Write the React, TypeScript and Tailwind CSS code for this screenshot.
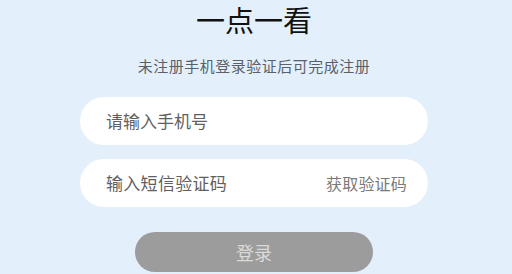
import React from "react";

export default function App() {
  return (
    <div
      className="w-[512px] h-[274px] overflow-hidden bg-[#e3f0fc]"
      style={{ fontFamily: '"Noto Sans CJK SC", "Noto Sans", sans-serif' }}
    >
      <div className="w-[508px] flex flex-col items-center pt-[2px]">
        <h1 className="text-[29px] leading-[34px] font-normal text-[#111111]">一点一看</h1>
        <p className="mt-[20px] text-[15px] leading-[20px] tracking-[0.5px] text-[#5b6068]">未注册手机登录验证后可完成注册</p>
        <div className="mt-[21px] w-[348px] h-[48px] rounded-full bg-white flex items-center pl-[26px] pr-[21px]">
          <span className="text-[17px] text-[#5f5f5f]">请输入手机号</span>
        </div>
        <div className="mt-[14px] w-[348px] h-[48px] rounded-full bg-white flex items-center justify-between pl-[26px] pr-[21px]">
          <span className="text-[17px] tracking-[0.3px] text-[#5f5f5f]">输入短信验证码</span>
          <span className="text-[16px] tracking-[0.2px] text-[#7a7a7a]">获取验证码</span>
        </div>
        <button className="mt-[25px] w-[238px] h-[40px] rounded-full bg-[#9c9c9c] text-[18px] text-[#dadada] flex items-center justify-center">
          登录
        </button>
      </div>
    </div>
  );
}
